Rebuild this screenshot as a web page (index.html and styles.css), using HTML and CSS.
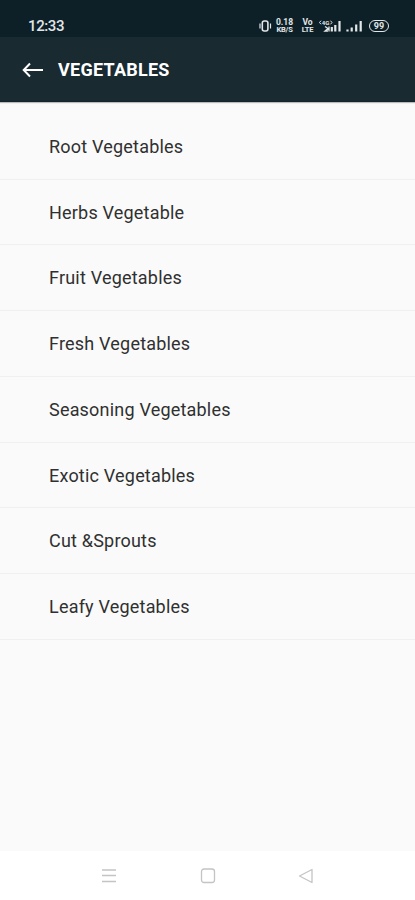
FILE: index.html
```html
<!DOCTYPE html>
<html lang="en">
<head>
<meta charset="utf-8">
<title>Vegetables</title>
<link rel="stylesheet" href="styles.css">
</head>
<body>
<div class="status">
  <span class="clock">12:33</span>
  <div class="indicators">
    <svg class="vibrate" width="14" height="14" viewBox="0 0 14 14" fill="none" stroke="currentColor"><rect x="3.300" y="2" width="5.600" height="10" rx="2" stroke-width="1.600"/><path d="M1 4.500v5M11.500 4.500v5" stroke-width="1.200"/></svg>
    <span class="stack speed"><b>0.18</b><b>KB/S</b></span>
    <span class="stack volte"><b>Vo</b><b>LTE</b></span>
    <svg class="signal-main" width="24" height="14" viewBox="0 0 24 14" fill="none" stroke="currentColor"><path d="M2 1.700.5 3.500 2 5.300M11.500 1.700 13 3.500l-1.500 1.800" stroke-width="1"/><text x="2.700" y="6" class="net">4G</text><path d="M6 7.500l3 2-3 2.500h3M10 7.500v5" stroke-width="1.300"/><path d="M12.800 8v4.500M16.300 6v6.500M20.500 2v10.500" stroke-width="2.200"/></svg>
    <svg class="signal" width="17" height="14" viewBox="0 0 17 14" fill="none" stroke="currentColor" stroke-width="2.200"><path d="M1.500 10.500v2M5.700 8.500v4M10.200 5.500v7M14.700 2v10.500"/></svg>
    <span class="battery">99</span>
  </div>
</div>
<header class="bar">
  <svg class="back" width="22" height="16" viewBox="0 0 22 16" fill="none" stroke="currentColor" stroke-width="2"><path d="M21 8H2M8 1.500 1.700 8 8 14.500"/></svg>
  <h1>VEGETABLES</h1>
</header>
<main>
  <ul class="list">
    <li>Root Vegetables</li>
    <li>Herbs Vegetable</li>
    <li>Fruit Vegetables</li>
    <li>Fresh Vegetables</li>
    <li>Seasoning Vegetables</li>
    <li>Exotic Vegetables</li>
    <li>Cut &amp;Sprouts</li>
    <li>Leafy Vegetables</li>
  </ul>
</main>
<nav class="nav">
  <svg width="16" height="16" viewBox="0 0 16 16"><path d="M1 2h14M1 7.500h14M1 13.500h14"/></svg>
  <svg width="16" height="16" viewBox="0 0 16 16"><rect x="1.500" y="1" width="13" height="13.500" rx="2.500"/></svg>
  <svg width="16" height="16" viewBox="0 0 16 16"><path d="M14 1.500v13L1.500 8z" stroke-linejoin="round"/></svg>
</nav>
</body>
</html>
```

FILE: styles.css
```css
* { box-sizing: border-box; }

body {
  margin: 0;
  height: 900px;
  display: flex;
  flex-direction: column;
  overflow: hidden;
  background: #fafafa;
  font-family: Roboto, "Liberation Sans", sans-serif;
}

.status {
  height: 37px;
  flex: none;
  display: flex;
  justify-content: space-between;
  padding: 15px 26px 0 28px;
  background: #0d2027;
  color: #e2e6e8;
}

.clock {
  font-size: 15px;
  line-height: 22px;
  letter-spacing: -0.4px;
  font-weight: 500;
}

.indicators {
  display: flex;
  align-items: center;
  height: 22px;
}

.stack {
  display: flex;
  flex-direction: column;
  align-items: center;
  font-size: 8.5px;
  line-height: 7px;
}

.stack b {
  height: 7px;
  font-weight: 700;
}

.stack b + b {
  font-size: 7.5px;
  letter-spacing: -0.2px;
}

.speed { width: 19px; margin-left: 2px; }
.volte { width: 15px; margin-left: 6px; margin-right: 4px; }

.net {
  font-size: 6px;
  font-weight: 700;
  fill: currentColor;
  stroke: none;
}

.signal { margin-left: 3px; }

.battery {
  width: 20px;
  height: 12px;
  margin-left: 6px;
  border: 1.5px solid currentColor;
  border-radius: 6px;
  font-size: 9px;
  font-weight: 700;
  line-height: 10px;
  text-align: center;
}

.bar {
  height: 65px;
  flex: none;
  display: flex;
  align-items: center;
  padding: 2px 0 0 22px;
  background: #192a31;
  border-bottom: 1px solid #13242b;
  box-shadow: 0 1px 1px rgba(0, 0, 0, 0.25);
  color: #fff;
}

.bar h1 {
  margin: 0 0 0 14px;
  font-size: 18px;
  line-height: 24px;
  font-weight: 700;
  letter-spacing: 0.25px;
}

main { flex: 1; padding-top: 11.75px; }

.list {
  margin: 0;
  padding: 0;
  list-style: none;
}

.list li {
  height: 65.75px;
  padding: 0 49px;
  border-bottom: 1px solid #f0f0f0;
  font-size: 18px;
  line-height: 66px;
  letter-spacing: 0.2px;
  color: #303030;
}

.nav {
  height: 49px;
  flex: none;
  display: flex;
  justify-content: space-between;
  align-items: center;
  padding: 0 101px;
  background: #fff;
}

.nav svg {
  fill: none;
  stroke: #c4c4c4;
  stroke-width: 1.3;
}
```
